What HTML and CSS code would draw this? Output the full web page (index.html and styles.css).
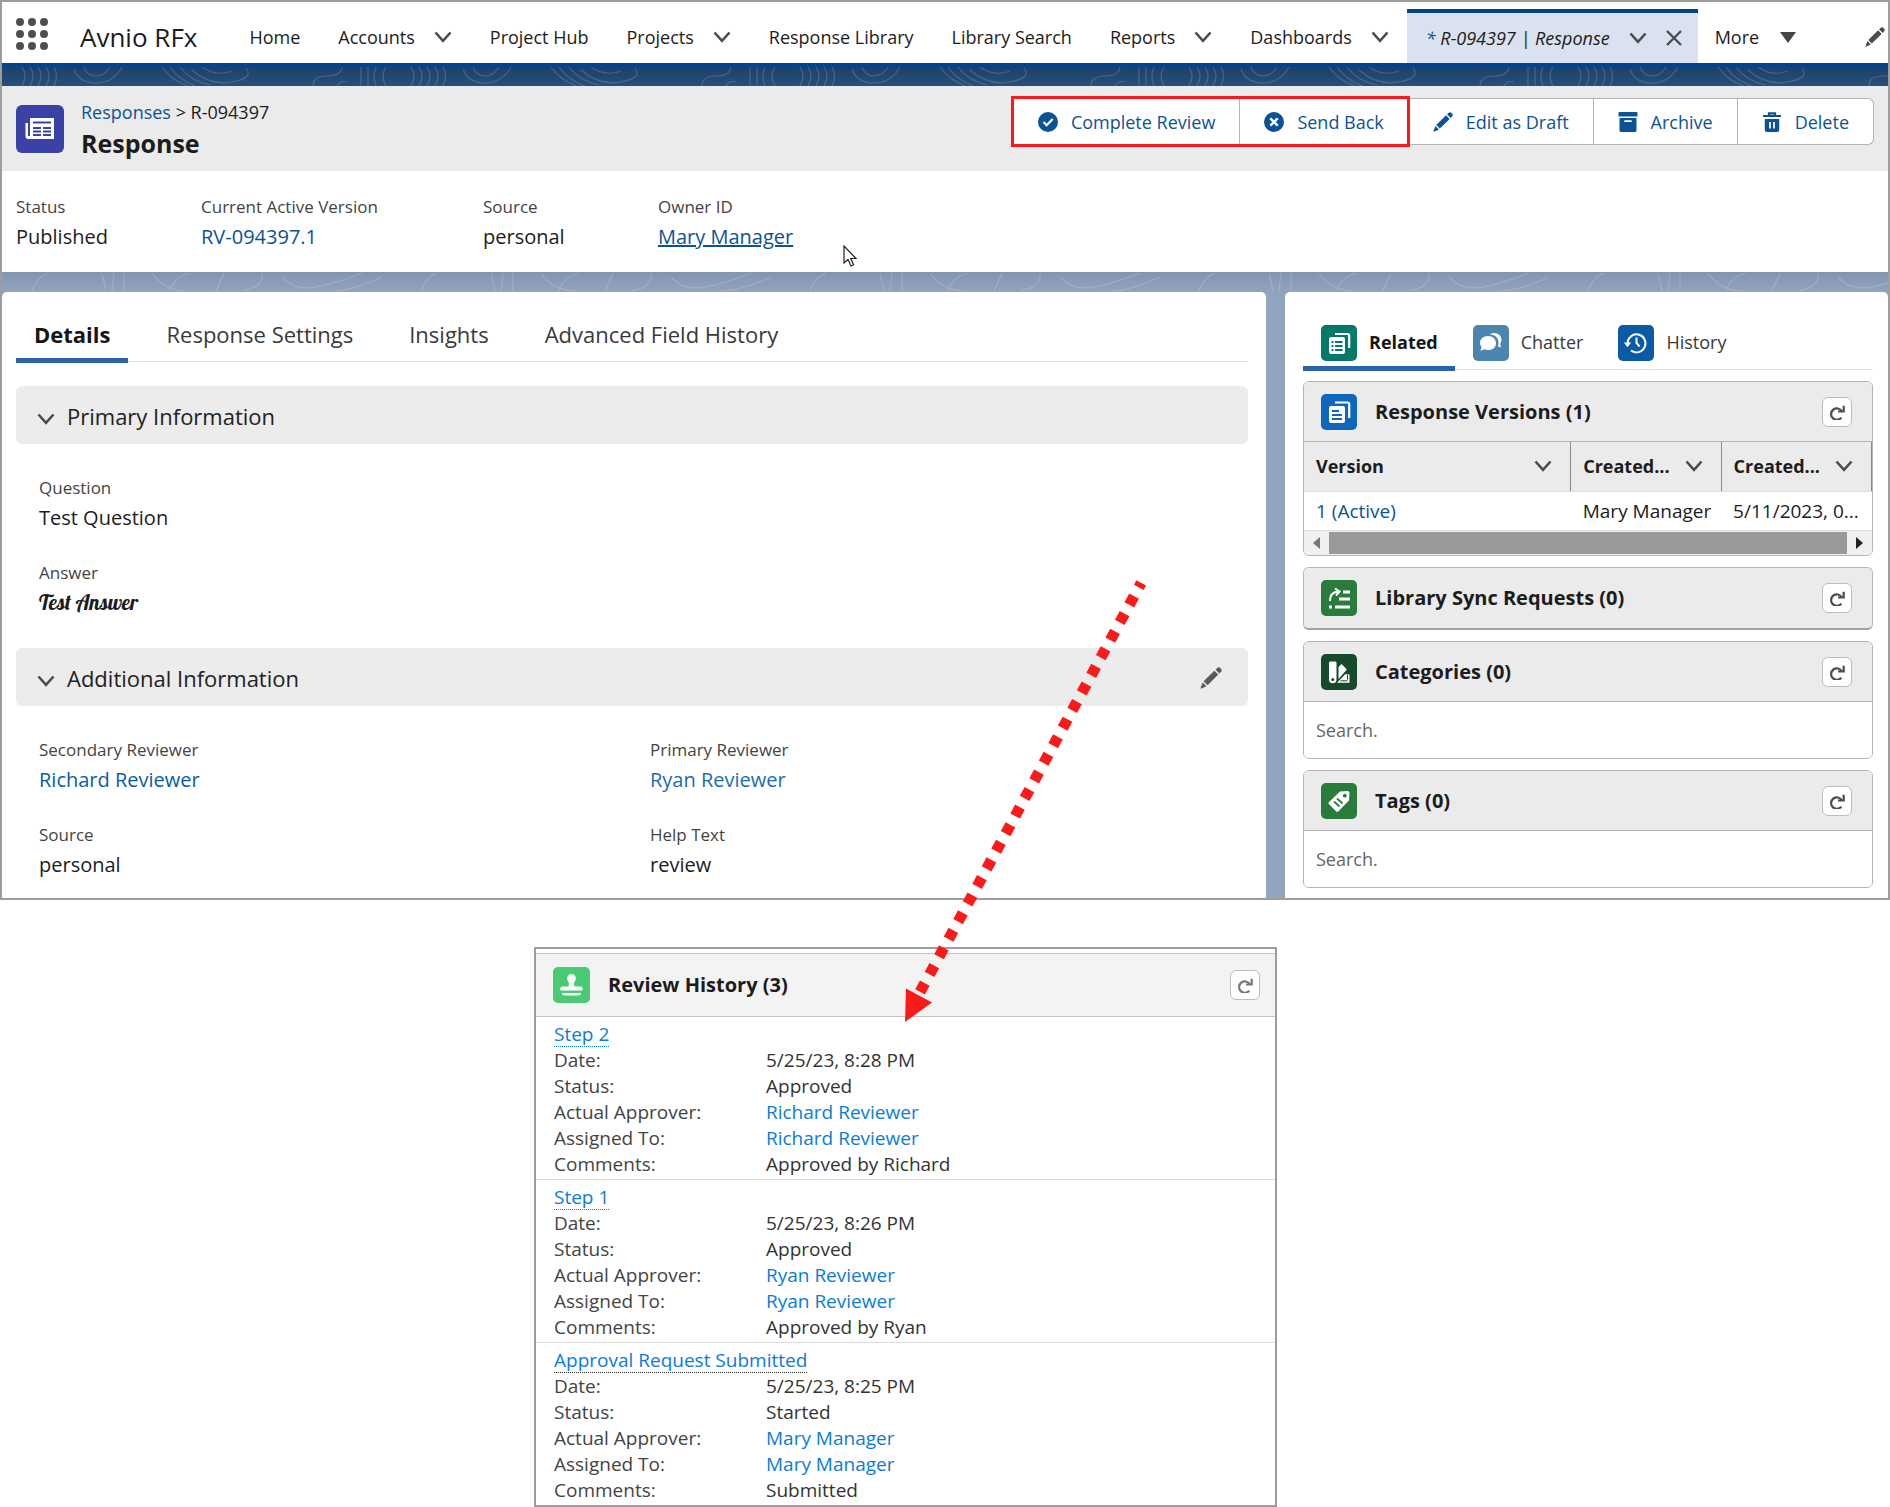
FILE: index.html
```html
<!DOCTYPE html>
<html lang="en">
<head>
<meta charset="utf-8">
<meta name="viewport" content="width=device-width, initial-scale=1">
<title>R-094397 | Response</title>
<link rel="stylesheet" href="styles.css">
</head>
<body>
<svg class="sprite" aria-hidden="true">
  <symbol id="chevron" viewBox="0 0 18 12"><path d="M1.500 1.500 9 9.800 16.500 1.500" fill="none" stroke="currentColor" stroke-width="2.600"/></symbol>
  <symbol id="pencil" viewBox="0 0 22 22"><path d="M15.500 2.600 17.300.9c.9-.9 2.100-.8 3 .1l.8.9c.8.9.8 2 0 2.900l-1.700 1.700zM14.400 3.700l3.900 3.900L7.500 18.200l-3.900-3.900zM2.700 15.400l3.800 3.800-4.900 2.200c-.7.300-1.200-.2-.9-.9z" fill="currentColor"/></symbol>
  <symbol id="refresh" viewBox="0 0 16 16"><path d="M12.300 13.600A5.700 5.700 0 1 1 12.800 7.300" fill="none" stroke="currentColor" stroke-width="2.200"/><path d="M15.800 1.800v6.800H9V6.500h4.600V1.800z" fill="currentColor"/></symbol>
  <symbol id="check-circle" viewBox="0 0 20 20"><circle cx="10" cy="10" r="10" fill="currentColor"/><path d="m5.500 10 3.200 3.200 6-6.200" fill="none" stroke="#fff" stroke-width="2.200"/></symbol>
  <symbol id="cross-circle" viewBox="0 0 20 20"><circle cx="10" cy="10" r="10" fill="currentColor"/><path d="m6.300 6.300 7.400 7.400M13.700 6.300l-7.400 7.400" stroke="#fff" stroke-width="2.400"/></symbol>
  <symbol id="archive" viewBox="0 0 20 20"><path d="M1.500 0h17c.6 0 1 .4 1 1v3.500H.5V1c0-.6.4-1 1-1zM1.500 6h17v12.500c0 .9-.6 1.500-1.500 1.500H3c-.9 0-1.500-.6-1.500-1.500z" fill="currentColor"/><path d="M7 9.200h6" stroke="#fff" stroke-width="1.800" stroke-linecap="round"/></symbol>
  <symbol id="trash" viewBox="0 0 20 20"><path d="M1 4h18M7 4V1.300h6V4" fill="none" stroke="currentColor" stroke-width="2.200"/><path d="M2.800 7h14.400v11c0 1.200-.8 2-2 2H4.800c-1.200 0-2-.8-2-2z" fill="currentColor"/><path d="M8 10v6.500M12 10v6.500" stroke="#fff" stroke-width="1.700"/></symbol>
</svg>

<main class="page">
<div class="app">
  <nav class="nav" aria-label="Main">
    <button class="launcher" aria-label="App launcher">
      <svg width="32" height="32" viewBox="0 0 32 32" fill="#514f4d"><circle cx="4" cy="4" r="4"/><circle cx="16" cy="4" r="4"/><circle cx="28" cy="4" r="4"/><circle cx="4" cy="16" r="4"/><circle cx="16" cy="16" r="4"/><circle cx="28" cy="16" r="4"/><circle cx="4" cy="28" r="4"/><circle cx="16" cy="28" r="4"/><circle cx="28" cy="28" r="4"/></svg>
    </button>
    <span class="app-name">Avnio RFx</span>
    <ul class="nav-list">
      <li><a href="#">Home</a></li>
      <li><a href="#">Accounts</a><button aria-label="Accounts menu"><svg class="chev"><use href="#chevron"/></svg></button></li>
      <li><a href="#">Project Hub</a></li>
      <li><a href="#">Projects</a><button aria-label="Projects menu"><svg class="chev"><use href="#chevron"/></svg></button></li>
      <li><a href="#">Response Library</a></li>
      <li><a href="#">Library Search</a></li>
      <li><a href="#">Reports</a><button aria-label="Reports menu"><svg class="chev"><use href="#chevron"/></svg></button></li>
      <li><a href="#">Dashboards</a><button aria-label="Dashboards menu"><svg class="chev"><use href="#chevron"/></svg></button></li>
    </ul>
    <div class="open-tab">
      <a href="#"><span class="star">*</span> R-094397 | Response</a>
      <button aria-label="Tab menu"><svg class="chev"><use href="#chevron"/></svg></button>
      <button aria-label="Close tab"><svg width="16" height="16" viewBox="0 0 16 16"><path d="m1 1 14 14M15 1 1 15" stroke="currentColor" stroke-width="2.400"/></svg></button>
    </div>
    <button class="more">More <svg width="16" height="11" viewBox="0 0 16 11"><path d="M0 0h16L8 11z" fill="#444"/></svg></button>
    <button class="nav-edit" aria-label="Edit navigation"><svg width="20" height="20"><use href="#pencil"/></svg></button>
  </nav>

  <div class="band"></div>

  <header class="record-head">
    <svg class="record-icon" width="48" height="48" viewBox="0 0 48 48"><rect width="48" height="48" rx="6" fill="#3a42a5"/><path d="M14 13h24v21H12c-1.500 0-2.500-1-2.500-2.500V18H12v13h2z" fill="#fff"/><path d="M13 18v13" stroke="#3a42a5" stroke-width="1"/><path d="M17 17.500h18M17 23h8M27 23h8M17 26.500h8M27 26.500h8M17 30h8M27 30h8" stroke="#3a42a5" stroke-width="1.800"/></svg>
    <div class="record-title">
      <p class="crumbs"><a href="#">Responses</a> &gt; R-094397</p>
      <h1>Response</h1>
    </div>
    <div class="actions">
      <div class="actions-review">
        <button><svg width="20" height="20"><use href="#check-circle"/></svg>Complete Review</button>
        <button><svg width="20" height="20"><use href="#cross-circle"/></svg>Send Back</button>
      </div>
      <button><svg width="20" height="20"><use href="#pencil"/></svg>Edit as Draft</button>
      <button><svg width="20" height="20"><use href="#archive"/></svg>Archive</button>
      <button><svg width="20" height="20"><use href="#trash"/></svg>Delete</button>
    </div>
  </header>

  <dl class="highlights">
    <div><dt>Status</dt><dd>Published</dd></div>
    <div><dt>Current Active Version</dt><dd><a href="#">RV-094397.1</a></dd></div>
    <div><dt>Source</dt><dd>personal</dd></div>
    <div class="owner"><dt>Owner ID</dt><dd><a class="underlined" href="#">Mary Manager</a></dd>
      <svg class="cursor" width="15" height="22" viewBox="0 0 15 22"><path d="M1 1v17l4-3.500 3 6.500 2.600-1.200-2.900-6.300H13z" fill="#fff" stroke="#222" stroke-width="1.200"/></svg>
    </div>
  </dl>

  <div class="columns">
    <section class="panel details">
      <ul class="tabs">
        <li class="on"><a href="#">Details</a></li>
        <li><a href="#">Response Settings</a></li>
        <li><a href="#">Insights</a></li>
        <li><a href="#">Advanced Field History</a></li>
      </ul>
      <h2 class="section-head"><button><svg class="chev"><use href="#chevron"/></svg>Primary Information</button></h2>
      <dl class="fields one">
        <div><dt>Question</dt><dd>Test Question</dd></div>
        <div><dt>Answer</dt><dd class="script">Test Answer</dd></div>
      </dl>
      <h2 class="section-head"><button><svg class="chev"><use href="#chevron"/></svg>Additional Information</button><button aria-label="Edit"><svg width="22" height="22"><use href="#pencil"/></svg></button></h2>
      <dl class="fields two">
        <div><dt>Secondary Reviewer</dt><dd><a href="#">Richard Reviewer</a></dd></div>
        <div><dt>Primary Reviewer</dt><dd><a class="lighter" href="#">Ryan Reviewer</a></dd></div>
        <div><dt>Source</dt><dd>personal</dd></div>
        <div><dt>Help Text</dt><dd>review</dd></div>
      </dl>
    </section>

    <aside class="panel related">
      <ul class="tabs icon-tabs">
        <li class="on"><a href="#"><svg width="36" height="36" viewBox="0 0 36 36"><rect width="36" height="36" rx="5" fill="#04796a"/><path d="M14 9h12.500c1 0 1.700.7 1.700 1.700V23" fill="none" stroke="#fff" stroke-width="2.200"/><rect x="8" y="12" width="16" height="17" rx="2" fill="#fff"/><path d="M10.500 17h2M14 17h7.500M10.500 21h2M14 21h7.500M10.500 25h2M14 25h7.500" stroke="#04796a" stroke-width="1.800"/></svg>Related</a></li>
        <li><a href="#"><svg width="36" height="36" viewBox="0 0 36 36"><rect width="36" height="36" rx="5" fill="#4a86ae"/><path d="M15 11c4.800 0 8 3.200 8 7.200S19.800 25 15 25c-1.500 0-2.600-.2-3.800-.8L7.500 26l1-4c-1-1.300-1.500-2.400-1.500-4 0-4 3.300-7 8-7z" fill="#fff"/><path d="M17 9.500c1-1 2.500-1.500 4-1.500 4.500 0 7.500 3 7.500 6.800 0 1.600-.4 2.600-1.300 3.900l1 3.800-3.400-1.300c2.500-6.500-1.700-11.700-7.800-11.700z" fill="#fff"/></svg>Chatter</a></li>
        <li><a href="#"><svg width="36" height="36" viewBox="0 0 36 36"><rect width="36" height="36" rx="5" fill="#0b5aa5"/><path d="M9.500 18.500a9 9 0 1 1 3.500 7" fill="none" stroke="#fff" stroke-width="2"/><path d="M5.800 17.500h7.400l-3.700 4.800z" fill="#fff"/><path d="M18.500 12.500V18l3 3.500" fill="none" stroke="#fff" stroke-width="2"/></svg>History</a></li>
      </ul>

      <article class="card">
        <header><svg width="36" height="36" viewBox="0 0 36 36"><rect width="36" height="36" rx="5" fill="#0e66bd"/><path d="M14 8.500h12.500c1 0 1.700.7 1.700 1.700V24" fill="none" stroke="#fff" stroke-width="2.200"/><rect x="8" y="12" width="16" height="17" rx="2" fill="#fff"/><path d="M11 17h7M11 21h10M11 25h10" stroke="#0e66bd" stroke-width="1.800"/></svg><h3>Response Versions (1)</h3><button class="refresh" aria-label="Refresh"><svg width="16" height="16"><use href="#refresh"/></svg></button></header>
        <table>
          <colgroup><col class="wide"><col><col></colgroup>
          <thead><tr>
            <th><span class="th">Version<svg class="chev"><use href="#chevron"/></svg></span></th>
            <th><span class="th">Created...<svg class="chev"><use href="#chevron"/></svg></span></th>
            <th><span class="th">Created...<svg class="chev"><use href="#chevron"/></svg></span></th>
          </tr></thead>
          <tbody><tr><td><a href="#">1 (Active)</a></td><td>Mary Manager</td><td>5/11/2023, 0...</td></tr></tbody>
        </table>
        <div class="scroll">
          <svg width="7" height="12" viewBox="0 0 7 12"><path d="M7 0v12L0 6z" fill="#777"/></svg>
          <span class="thumb"></span>
          <svg width="7" height="12" viewBox="0 0 7 12"><path d="M0 0v12l7-6z" fill="#222"/></svg>
        </div>
      </article>

      <article class="card closed">
        <header><svg width="36" height="36" viewBox="0 0 36 36"><rect width="36" height="36" rx="5" fill="#2a7c3c"/><path d="M9 21c0-5.500 3-9 8-9.500M14 8.500l4.500 3-3.500 4" fill="none" stroke="#fff" stroke-width="2"/><path d="M22 12h7M18 19h11M14 27h15M8 27h3" stroke="#fff" stroke-width="2.800"/></svg><h3>Library Sync Requests (0)</h3><button class="refresh" aria-label="Refresh"><svg width="16" height="16"><use href="#refresh"/></svg></button></header>
      </article>

      <article class="card">
        <header><svg width="36" height="36" viewBox="0 0 36 36"><rect width="36" height="36" rx="5" fill="#174a2a"/><path d="M8 9c0-1 .5-1.500 1.500-1.500H14c1 0 1.500.5 1.500 1.500v16.500a3.700 3.700 0 0 1-7.500 0z" fill="#fff"/><path d="m17.500 13 3-3 4.500 4.500c.7.700.7 1.200 0 2L17.500 25z" fill="#fff"/><path d="m24.500 20 4 .5v8.300H16z" fill="#fff"/><path d="M19.500 26.800h7M26.500 20.500v5" stroke="#174a2a" stroke-width="1"/><circle cx="11.800" cy="25.500" r="1.500" fill="#174a2a"/></svg><h3>Categories (0)</h3><button class="refresh" aria-label="Refresh"><svg width="16" height="16"><use href="#refresh"/></svg></button></header>
        <input type="text" placeholder="Search." aria-label="Search categories">
      </article>

      <article class="card">
        <header><svg width="36" height="36" viewBox="0 0 36 36"><rect width="36" height="36" rx="5" fill="#2a7c3c"/><path d="M19 8.500 26.500 8c1.200 0 2 .8 2 2l-.5 7.500L17.500 28.300c-.8.800-1.600.8-2.400 0L8 21.300c-.8-.8-.8-1.600 0-2.400z" fill="#fff"/><circle cx="23.800" cy="12.700" r="1.900" fill="#2a7c3c"/><path d="m13 18.500 5.500 5M16 15.500l5.500 5" stroke="#2a7c3c" stroke-width="1.700"/></svg><h3>Tags (0)</h3><button class="refresh" aria-label="Refresh"><svg width="16" height="16"><use href="#refresh"/></svg></button></header>
        <input type="text" placeholder="Search." aria-label="Search tags">
      </article>
    </aside>
  </div>
</div>

<div class="lower">
  <section class="review">
    <header><svg width="37" height="37" viewBox="0 0 37 37"><rect width="37" height="36" rx="5" fill="#4bca76"/><path d="M18.500 7a4.400 4.400 0 0 1 3.500 7.100c-.9 1.200-1.300 2.900-.4 5.400H27c1.700 0 2.800 1 2.800 2.500 0 .9-.5 1.500-1.300 1.500h-20c-.8 0-1.300-.6-1.300-1.500 0-1.500 1.100-2.500 2.800-2.500h5.400c.9-2.500.5-4.200-.4-5.400A4.400 4.400 0 0 1 18.500 7z" fill="#fff"/><path d="M9 26h19c0 1.500-1 2.500-2.500 2.500h-14C10 28.500 9 27.500 9 26z" fill="#fff"/></svg><h3>Review History (3)</h3><button class="refresh" aria-label="Refresh"><svg width="16" height="16"><use href="#refresh"/></svg></button></header>
    <div class="step">
      <a class="step-name" href="#">Step 2</a>
      <dl>
        <dt>Date:</dt><dd>5/25/23, 8:28 PM</dd>
        <dt>Status:</dt><dd>Approved</dd>
        <dt>Actual Approver:</dt><dd><a href="#">Richard Reviewer</a></dd>
        <dt>Assigned To:</dt><dd><a href="#">Richard Reviewer</a></dd>
        <dt>Comments:</dt><dd>Approved by Richard</dd>
      </dl>
    </div>
    <div class="step">
      <a class="step-name" href="#">Step 1</a>
      <dl>
        <dt>Date:</dt><dd>5/25/23, 8:26 PM</dd>
        <dt>Status:</dt><dd>Approved</dd>
        <dt>Actual Approver:</dt><dd><a href="#">Ryan Reviewer</a></dd>
        <dt>Assigned To:</dt><dd><a href="#">Ryan Reviewer</a></dd>
        <dt>Comments:</dt><dd>Approved by Ryan</dd>
      </dl>
    </div>
    <div class="step">
      <a class="step-name dark" href="#">Approval Request Submitted</a>
      <dl>
        <dt>Date:</dt><dd>5/25/23, 8:25 PM</dd>
        <dt>Status:</dt><dd>Started</dd>
        <dt>Actual Approver:</dt><dd><a href="#">Mary Manager</a></dd>
        <dt>Assigned To:</dt><dd><a href="#">Mary Manager</a></dd>
        <dt>Comments:</dt><dd>Submitted</dd>
      </dl>
    </div>
    <svg class="arrow" width="250" height="450" viewBox="900 576 250 450" aria-hidden="true">
      <path d="M1141.200 582.900 920 992" stroke="#fb1a1a" stroke-width="11" stroke-dasharray="10 10" stroke-dashoffset="5"/>
      <path d="M906 988.500 932 1002.500 905 1022z" fill="#fb1a1a"/>
    </svg>
  </section>
</div>
</main>
</body>
</html>
```
FILE: styles.css
```css
* { box-sizing: border-box; }

:root {
  --link: #0b5394;
  --ink: #1c1c1c;
  --muted: #444;
  --frame: #9d9d9d;
  --grey: #ebebeb;
  --line: #b4b4b4;
}

body {
  margin: 0;
  background: #fff;
  color: var(--ink);
  font: 18px/26px "Open Sans", "Noto Sans", sans-serif;
}

h1, h2, h3, p, ul, dl, dd { margin: 0; padding: 0; }
ul { list-style: none; }
svg { flex: none; display: block; }
a { color: var(--link); text-decoration: none; }
button {
  display: flex;
  align-items: center;
  padding: 0;
  border: 0;
  background: none;
  color: inherit;
  font: inherit;
  white-space: nowrap;
}

.sprite { position: absolute; width: 0; height: 0; }
.chev { width: 18px; height: 12px; color: #4c4c4c; }

.app { border: 2px solid var(--frame); background: #fff; overflow: hidden; }

/* Navigation */
.nav {
  display: flex;
  align-items: stretch;
  height: 61px;
  padding: 9px 3px 0 14px;
  white-space: nowrap;
}
.nav a { color: var(--ink); }
.launcher { padding-bottom: 6px; }
.app-name { align-self: center; margin: 0 52px 0 32px; font-size: 26px; }
.nav-list { display: flex; gap: 38px; }
.nav-list li { display: flex; align-items: center; gap: 19px; }
.open-tab {
  display: flex;
  align-items: center;
  gap: 19px;
  margin: -2px 0 0 18px;
  padding: 0 16px 0 19px;
  border-top: 4px solid #06457f;
  background: #d9e2ee;
  font-style: italic;
}
.open-tab .star { color: var(--link); }
.open-tab button { color: #4c4c4c; }
.more { gap: 21px; margin-left: 17px; }
.nav-edit { margin-left: auto; color: #4c4c4c; }

.band {
  height: 23px;
  border-top: 4px solid #01458a;
  background: url("data:image/svg+xml,%3Csvg xmlns='http://www.w3.org/2000/svg' width='389' height='19'%3E%3Cg fill='none' stroke='%23fff' stroke-opacity='.16' stroke-width='1.200'%3E%3Cpath d='M20 0q6 9 0 19M28 0q6 9 0 19M36 0q6 9 0 19M44 0q6 9 0 19M52 0q5 9 0 19M72 2q5 14 22 14t26-16M82 0q3 9 12 9t14-9M160 0q10 14 26 19M168 0q8 12 25 19M178 0q10 14 30 18M190 3q18 16 40 12t14-14M200 0q14 10 30 4M311 19q0-10 14-10t15-9M335 19q3-6 10-4M359 0v19M366 0v19M374 0q-4 9 0 19M384 0q-6 9 0 19'/%3E%3C/g%3E%3C/svg%3E"), linear-gradient(#1d4069, #26507b);
}

/* Record header */
.record-head {
  display: flex;
  align-items: center;
  padding: 12px 14px 11px;
  background: var(--grey);
}
.record-title { margin-left: 17px; }
.crumbs { font-size: 18px; line-height: 28px; }
h1 { font-size: 25px; line-height: 34px; }
.actions { display: flex; align-self: flex-start; margin-left: auto; }
.actions button {
  gap: 13px;
  height: 47px;
  padding: 0 24px;
  border: 1px solid var(--line);
  border-left-width: 0;
  background: #fff;
  color: var(--link);
}
.actions button:last-child { border-radius: 0 6px 6px 0; }
.actions-review { position: relative; display: flex; }
.actions-review button:last-child { border-radius: 0; }
.actions-review::after {
  content: "";
  position: absolute;
  inset: -2px -1px -2px -3px;
  border: 3px solid #fb1a1a;
}

.highlights {
  display: grid;
  grid-template-columns: 185px 282px 175px 1fr;
  padding: 24px 14px 18px;
  border-bottom: 1px solid #8595ad;
}
dt { color: var(--muted); font-size: 17px; line-height: 24px; }
dd { font-size: 20px; line-height: 35px; }
.underlined { text-decoration: underline; }
.owner { position: relative; }
.cursor { position: absolute; left: 185px; top: 50px; }

/* Body columns */
.columns {
  display: grid;
  grid-template-columns: 1264fr 603fr;
  gap: 19px;
  padding-top: 19px;
  background: url("data:image/svg+xml,%3Csvg xmlns='http://www.w3.org/2000/svg' width='389' height='18'%3E%3Cg fill='none' stroke='%23fff' stroke-opacity='.17' stroke-width='1.200'%3E%3Cpath d='M30 18q5-14 16-18M100 0l4 18M112 0l-2 18M122 0v18M150 0q12 18 36 18M168 18q4-14 20-18M214 18l8-18M240 18q22-4 20-18M280 4q12 14 34 10T360 0M330 18q20 0 50-14'/%3E%3C/g%3E%3C/svg%3E") repeat-x, linear-gradient(#8296b4, #93a4c0 20px);
}
.panel { min-width: 0; background: #fff; border-radius: 5px 5px 0 0; }
.details { padding: 23px 18px 0 14px; }
.tabs { display: flex; gap: 20px; border-bottom: 1px solid #e2e2e2; font-size: 22px; }
.tabs li { margin-bottom: -2px; padding: 0 18px 5px; border-bottom: 5px solid transparent; }
.tabs .on { border-color: #2b62ab; font-weight: 700; }
.tabs a { display: flex; align-items: center; color: #3a3a3a; line-height: 38px; white-space: nowrap; }
.tabs .on a { color: #151515; }

.section-head {
  display: flex;
  justify-content: space-between;
  align-items: center;
  height: 58px;
  padding: 2px 26px 0 21px;
  border-radius: 6px;
  background: #ececec;
  font-size: 22px;
  font-weight: 400;
}
.section-head button { gap: 12px; color: #222; }
.section-head .chev { margin-top: 5px; }
.section-head button:nth-child(2) { color: #5a5a5a; }
.tabs + .section-head { margin-top: 24px; }
.fields {
  display: grid;
  grid-template-columns: 1fr 1fr;
  gap: 26px 36px;
  padding: 32px 23px 28px;
}
.fields.one { grid-template-columns: 1fr; }
.fields.two { padding-bottom: 12px; }
.fields a { color: #0a5ba6; }
.fields .lighter { color: #1b6cb5; }
.script { font: 21px/35px Lobster, "Liberation Serif", serif; }

/* Related column */
.related { padding: 33px 15px 10px 18px; }
.icon-tabs { gap: 0; margin-bottom: 11px; font-size: 18px; }
.icon-tabs li { padding: 0 17px 5px 18px; }
.icon-tabs a { align-items: flex-start; gap: 12px; line-height: 34px; }
.card { border: 1px solid var(--line); border-radius: 6px; overflow: hidden; background: #fff; }
.card + .card { margin-top: 11px; }
.card.closed { border-bottom: 2px solid #a2a2a2; }
.card > header {
  display: flex;
  align-items: center;
  height: 60px;
  padding: 0 20px 0 17px;
  border-bottom: 1px solid var(--line);
  background: var(--grey);
}
.card.closed > header { border-bottom: 0; }
h3 { margin-left: 18px; font-size: 20px; line-height: 26px; }
.refresh {
  justify-content: center;
  width: 30px;
  height: 30px;
  margin-left: auto;
  border: 1px solid #bdbdbd;
  border-radius: 6px;
  background: #fff;
  color: #4c4c4c;
}
table { width: 100%; table-layout: fixed; border-collapse: collapse; font-size: 18px; }
col.wide { width: 47%; }
th { height: 49px; padding: 0 18px 0 12px; background: var(--grey); border-right: 1px solid #8a8a8a; border-bottom: 1px solid #ddd; text-align: left; }
.th { display: flex; align-items: center; justify-content: space-between; }
td { height: 39px; padding: 0 0 0 12px; font-size: 19px; white-space: nowrap; }
.scroll {
  display: flex;
  align-items: center;
  gap: 9px;
  height: 25px;
  padding: 1px 9px;
  border-top: 1px solid #ddd;
  background: #f0f0f0;
}
.thumb { flex: 1; height: 22px; background: #9a9a9a; }
.card input {
  display: block;
  width: 100%;
  height: 56px;
  padding: 0 12px;
  border: 0;
  background: #fff;
  font: inherit;
}
.card input::placeholder { color: #666; opacity: 1; }

/* Review history */
.lower { display: grid; grid-template-columns: 534fr 743fr 613fr; margin-top: 47px; }
.review {
  position: relative;
  grid-column: 2;
  padding-top: 4px;
  border: 2px solid var(--frame);
  background: #fff;
}
.review > header {
  display: flex;
  align-items: center;
  height: 64px;
  padding: 0 15px 0 17px;
  border: 1px solid #c4c4c4;
  border-width: 1px 0;
  background: #f3f3f3;
}
.review .refresh { color: #777; }
.step { padding: 4px 18px 2px; font-size: 19px; }
.step + .step { border-top: 1px solid #ddd; }
.step a { color: #0d7bd8; }
.step-name { display: inline-block; height: 26px; border-bottom: 1px dotted #0d7bd8; vertical-align: top; }
.step .dark { border-color: #222; }
.step dl { display: grid; grid-template-columns: 212px 1fr; }
.step dt, .step dd { font-size: 19px; line-height: 26px; }
.step dd { color: #333; }
.arrow { position: absolute; left: 364px; top: -373px; }
```
